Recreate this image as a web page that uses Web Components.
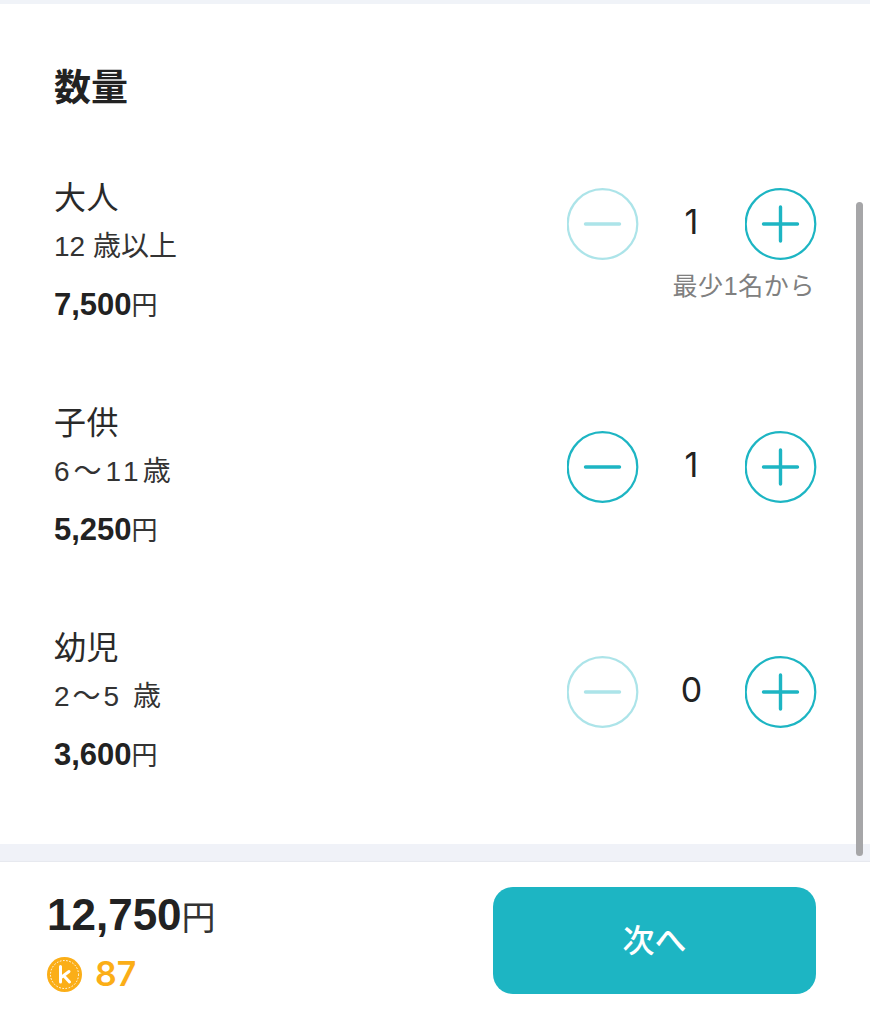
<!DOCTYPE html>
<html lang="ja">
<head>
<meta charset="utf-8">
<style>
html,body {margin:0; background:#fff;}
body {width:870px; height:1010px; overflow:hidden; font-family:"Liberation Sans","Noto Sans CJK JP",sans-serif; color:#222;}
</style>
</head>
<body>
<booking-sheet>
    <h2 slot="title">数量</h2>
    <qty-row name="大人" age="12 歳以上" price="7,500" count="1" min="1" note="最少1名から"></qty-row>
    <qty-row name="子供" age="6～11歳" spread="4" price="5,250" count="1" min="0"></qty-row>
    <qty-row name="幼児" age="2～5 歳" spread="3" price="3,600" count="0" min="0"></qty-row>
    <total-bar slot="footer" total="12,750" points="87" action="次へ"></total-bar>
</booking-sheet>
<script>
customElements.define('booking-sheet', class extends HTMLElement {
    constructor() {
        super();
        this.attachShadow({ mode: 'open' }).innerHTML = `
        <style>
        :host {display:flex; flex-direction:column; height:1010px; position:relative;}
        .gap-top {height:4px; background:#f0f3f8; flex:none;}
        main {height:840px; flex:none; box-sizing:border-box; padding:63px 53px 0 54px; display:flex; flex-direction:column;}
        .gap-bottom {height:18px; background:#f0f2f8; box-shadow:inset 0 -2px 1px -1px #e6e8ee; flex:none;}
        ::slotted(h2) {margin:0 0 65px; font-size:37px; line-height:44px; font-weight:700; color:#222;}
        .rows {display:flex; flex-direction:column; gap:69px;}
        .thumb {position:absolute; left:856px; top:202px; width:7px; height:654px; border-radius:4px; background:#a6a6a8;}
        </style>
        <div class="gap-top"></div>
        <main>
            <slot name="title"></slot>
            <div class="rows"><slot></slot></div>
        </main>
        <div class="gap-bottom"></div>
        <slot name="footer"></slot>
        <div class="thumb"></div>`;
    }
});

customElements.define('qty-row', class extends HTMLElement {
    constructor() {
        super();
        this.attachShadow({ mode: 'open' });
    }
    connectedCallback() {
        const a = n => this.getAttribute(n) || '';
        const off = +a('count') <= +a('min');
        this.shadowRoot.innerHTML = `
        <style>
        :host {display:flex; justify-content:space-between; height:156px;}
        .name {font-size:32px; line-height:44px; color:#2a2a2a; letter-spacing:.5px;}
        .age {font-size:28px; line-height:36px; margin-top:9px; color:#333; letter-spacing:${a('spread') || 0}px;}
        .price {font-size:31px; line-height:36px; margin-top:22px; font-weight:700; color:#222; display:flex; align-items:baseline;}
        .price span {font-size:26px; font-weight:400; color:#333;}
        .ctl {width:250px; height:132px; display:flex; flex-direction:column; justify-content:center; align-items:flex-end;}
        .stepper {display:flex; align-items:center; width:250px; justify-content:space-between;}
        .count {font-size:34px; margin:0 0 6px -1px; color:#222; font-family:"Inter","Liberation Sans",sans-serif;}
        .note {font-size:25px; line-height:30px; margin:11px 2px -5px 0; letter-spacing:.6px; color:#808080;}
        </style>
        <div>
            <div class="name">${a('name')}</div>
            <div class="age">${a('age')}</div>
            <div class="price">${a('price')}<span>円</span></div>
        </div>
        <div class="ctl">
            <div class="stepper">
                <round-btn kind="minus" ${off ? 'off' : ''}></round-btn>
                <div class="count">${a('count')}</div>
                <round-btn kind="plus"></round-btn>
            </div>
            ${a('note') ? `<div class="note">${a('note')}</div>` : ''}
        </div>`;
    }
});

customElements.define('round-btn', class extends HTMLElement {
    constructor() {
        super();
        this.attachShadow({ mode: 'open' });
    }
    connectedCallback() {
        const plus = this.getAttribute('kind') == 'plus';
        this.shadowRoot.innerHTML = `
        <style>
        :host {display:block; width:72px; height:72px;}
        :host([off]) {opacity:.36;}
        svg {display:block; fill:none; stroke:#1db5c3;}
        </style>
        <svg width="72" height="72" viewBox="0 0 72 72">
            <circle cx="35.5" cy="36" r="34.8" stroke-width="2.2"/>
            <path d="M18.5 36H52.5${plus ? 'M35.5 19V53' : ''}" stroke-width="3.4" stroke-linecap="round"/>
        </svg>`;
    }
});

customElements.define('total-bar', class extends HTMLElement {
    constructor() {
        super();
        this.attachShadow({ mode: 'open' });
    }
    connectedCallback() {
        const a = n => this.getAttribute(n) || '';
        this.shadowRoot.innerHTML = `
        <style>
        :host {display:flex; justify-content:space-between; flex:1; padding:25px 54px 0 47px; background:#fff;}
        .total {font-size:44px; line-height:55px; font-weight:700; color:#222; display:flex; align-items:baseline;}
        .total span {font-size:34px; font-weight:400; color:#333;}
        .pts {display:flex; align-items:center; gap:13px; margin-top:8px; font-size:34px; line-height:40px; color:#fbae17; font-family:"Inter","Liberation Sans",sans-serif; font-weight:600;}
        button {width:323px; height:107px; padding:0 0 5px; border:0; border-radius:20px; background:#1db5c3; color:#fff; font:500 32px "Noto Sans CJK JP",sans-serif;}
        </style>
        <div>
            <div class="total">${a('total')}<span>円</span></div>
            <div class="pts">
                <svg width="35" height="35" viewBox="0 0 35 35">
                    <circle cx="17.5" cy="17.5" r="17.5" fill="#fbae17"/>
                    <circle cx="17.5" cy="17.5" r="14" fill="none" stroke="#fff" stroke-width="1" stroke-dasharray="1.6 1.6"/>
                    <path d="M13.5 9.5V25M22 14.5L14 20.5M16.5 18.5L22.5 25" fill="none" stroke="#fff" stroke-width="3" stroke-linecap="round"/>
                </svg>
                ${a('points')}
            </div>
        </div>
        <button>${a('action')}</button>`;
    }
});
</script>
</body>
</html>
